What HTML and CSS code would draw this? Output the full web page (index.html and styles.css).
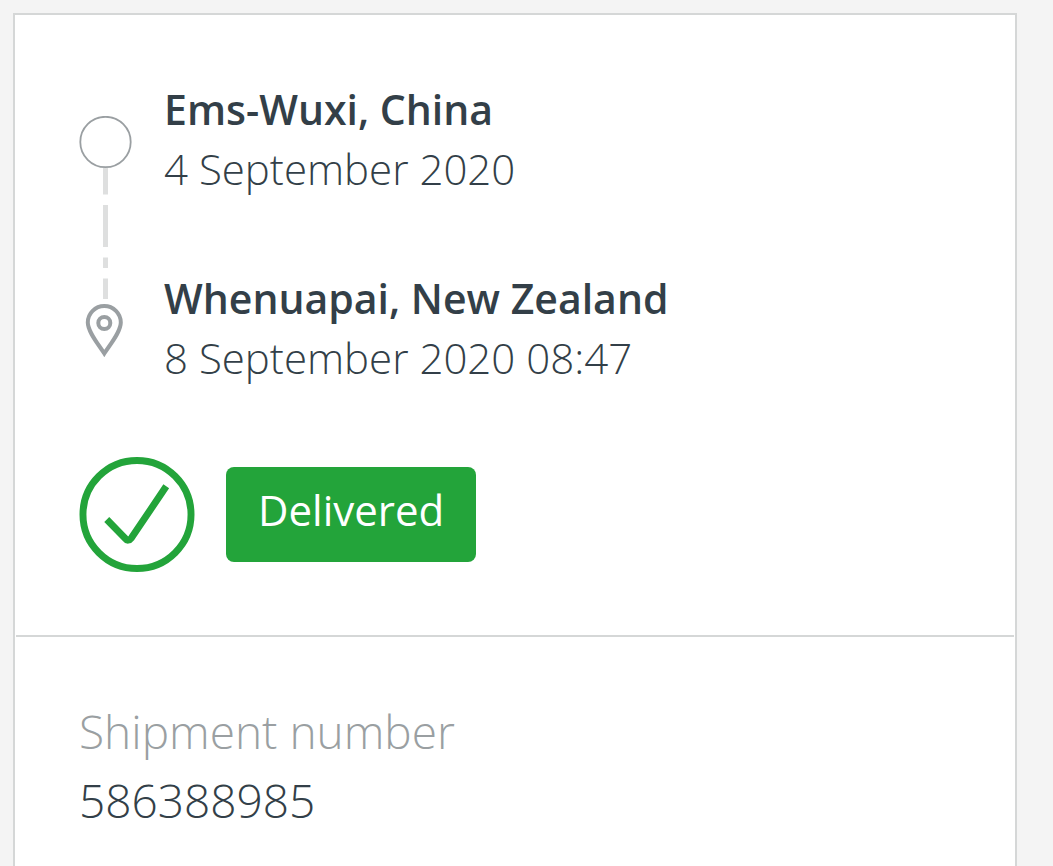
FILE: index.html
```html
<!DOCTYPE html>
<html lang="en">
<head>
  <meta charset="UTF-8" />
  <meta name="viewport" content="width=device-width, initial-scale=1.0"/>
  <title>Shipment tracking</title>
  <link rel="stylesheet" href="styles.css">
</head>
<body>
  <main class="card">
    <section class="journey">
      <div class="route">
        <svg class="route-line" viewBox="0 0 53 241" fill="none" aria-hidden="true">
          <circle cx="26.5" cy="26" r="25.2" stroke="#9a9fa2" stroke-width="1.8"/>
          <path d="M26.5 52V78.5M26.5 89V131M26.5 141.5V152M26.5 162.5V183" stroke="#dedfdf" stroke-width="5"/>
          <path d="M25.3 237.5C20 229 8.8 216 8.8 206.5a16.5 16.5 0 0 1 33 0C41.8 216 30.6 229 25.3 237.5Z" stroke="#9a9fa2" stroke-width="4"/>
          <circle cx="25.3" cy="207" r="6" stroke="#9a9fa2" stroke-width="4"/>
        </svg>
        <div class="stops">
          <div class="stop">
            <h2>Ems-Wuxi, China</h2>
            <p>4 September 2020</p>
          </div>
          <div class="stop">
            <h2>Whenuapai, New Zealand</h2>
            <p>8 September 2020 08:47</p>
          </div>
        </div>
      </div>

      <div class="status">
        <svg class="status-icon" viewBox="0 0 116 116" fill="none" stroke="#23a43a" stroke-width="7" aria-hidden="true">
          <circle cx="58" cy="58" r="54.5"/>
          <path d="M27.500 63L46 82Q49 86 52.500 81.500L87.500 29.500"/>
        </svg>
        <span class="badge">Delivered</span>
      </div>
    </section>

    <dl class="details">
      <dt>Shipment number</dt>
      <dd>586388985</dd>
    </dl>
  </main>
</body>
</html>
```

FILE: styles.css
```css
:root {
  --green: #23a43a;
  --border: #d5d7d7;
  --text: #333f48;
  --muted: #9a9fa2;
}

* {
  box-sizing: border-box;
}

body {
  margin: 0;
  padding: 13px 36px 0 13px;
  min-height: 100vh;
  display: flex;
  flex-direction: column;
  background-color: #f4f4f4;
  color: var(--text);
  font-family: "Open Sans", sans-serif;
  font-size: 42px;
  font-weight: 300;
  line-height: 60px;
}

h2, p, dl, dd {
  margin: 0;
}

.card {
  flex: 1;
  background: white;
  border: 2px solid var(--border);
  border-bottom: none;
  padding: 0 1px;
}

.journey {
  padding: 64px 63px 63px;
  border-bottom: 2px solid var(--border);
}

.route {
  display: flex;
  align-items: flex-start;
  gap: 32px;
}

.route-line {
  flex: none;
  width: 53px;
  height: 241px;
  margin-top: 37px;
}

.stops {
  display: grid;
  gap: 69px;
}

.stop h2 {
  font-size: 41px;
  font-weight: 600;
  line-height: 60px;
}

.status {
  display: flex;
  align-items: center;
  gap: 31px;
  margin-top: 69px;
}

.status-icon {
  flex: none;
  width: 116px;
  height: 115px;
}

.badge {
  padding: 13px 32px 22px;
  border-radius: 8px;
  background-color: var(--green);
  color: white;
  font-weight: 400;
}

.details {
  padding: 60px 63px 0;
  font-size: 46px;
  line-height: 69px;
}

.details dt {
  color: var(--muted);
}
```
